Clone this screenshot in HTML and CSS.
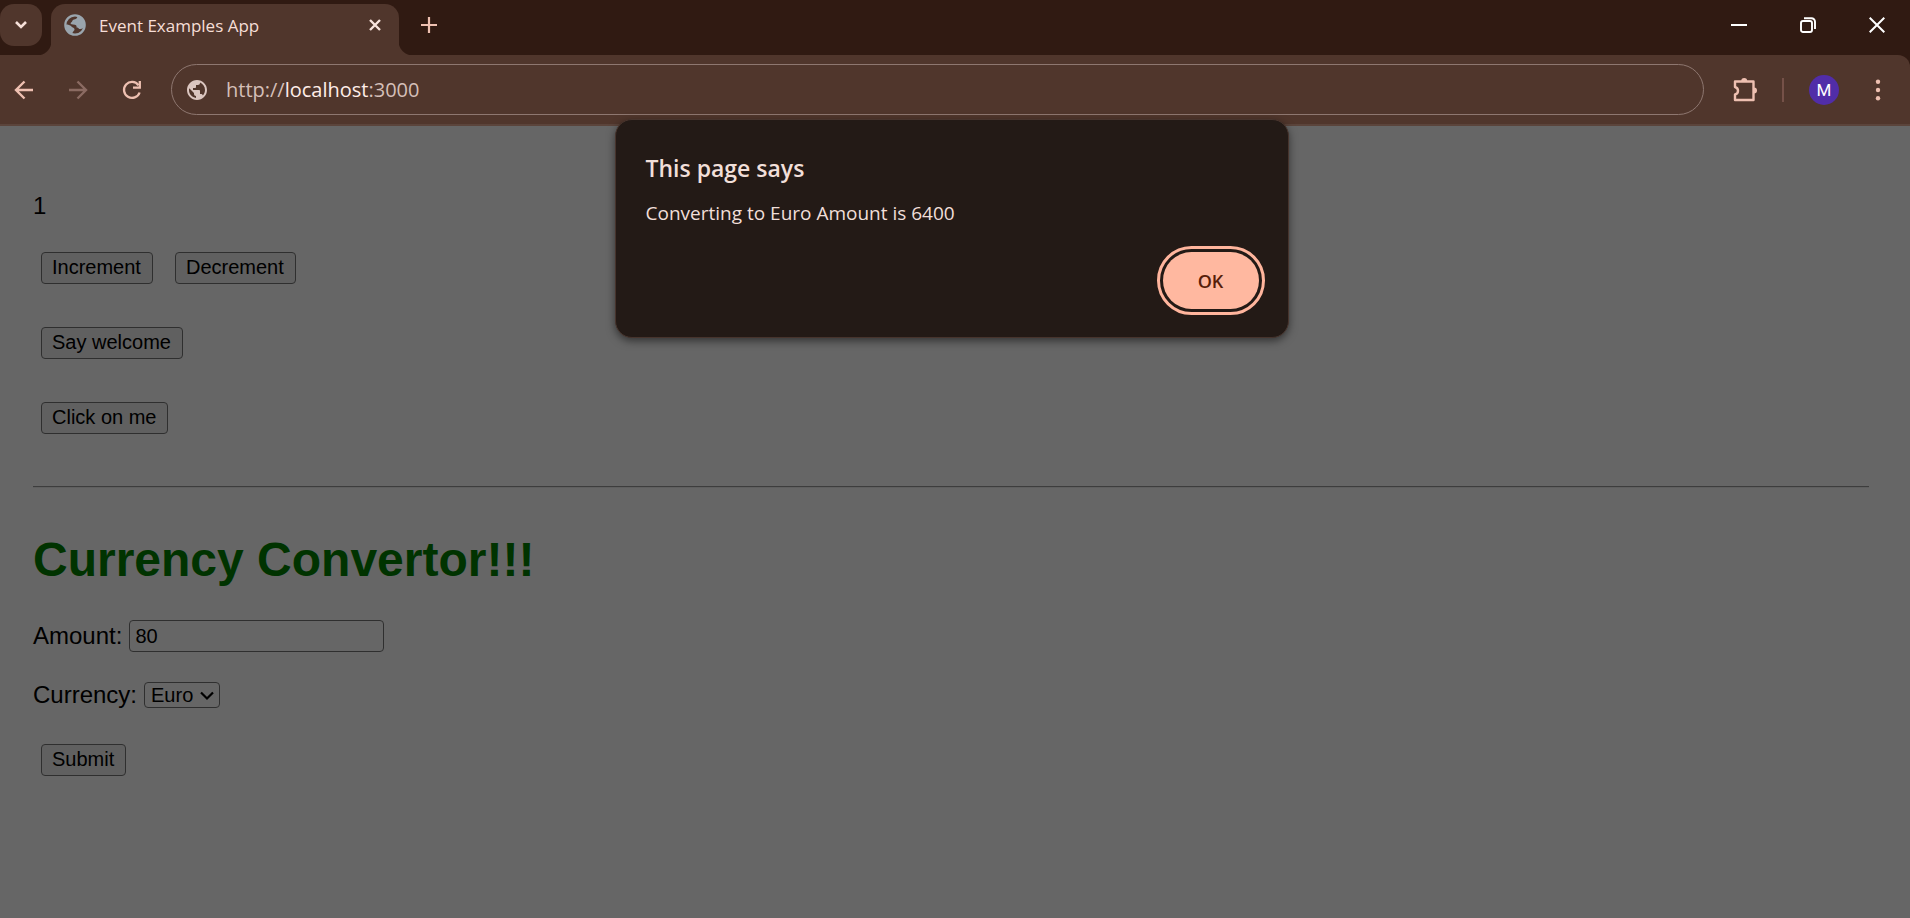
FILE: index.html
```html
<!DOCTYPE html>
<html lang="en">
<head>
<meta charset="utf-8">
<title>Event Examples App</title>
<link rel="stylesheet" href="styles.css">
</head>
<body>
<header class="browser">
  <div class="tabstrip">
    <button class="tab-search" aria-label="Search tabs"><svg width="14" height="10" viewBox="0 0 14 10"><path d="M2 2l5 5 5-5" fill="none" stroke="#f6e0d9" stroke-width="2.6"/></svg></button>
    <div class="tab">
      <svg class="favicon" width="22" height="22" viewBox="0 0 22 22"><circle cx="11" cy="11" r="9.7" fill="none" stroke="#9aa5ad" stroke-width="2.2"/><path d="M13.5 2.5C13 5 11.500 5 10 5.500C8 6 8.500 8 7 8.500C6 9.500 7 10.500 9 10.500C12 10.500 13 11.500 12.500 13.500C14 13.500 14.500 14 15 15C17 15 18.500 15 20.500 13V8C19 4.500 16.500 2.500 13.500 2.500ZM2 10.500C4 10.500 6 11 7.500 12.500C8.500 14 10.500 13.500 10.500 15.500C10.500 17 8.500 17 8.500 20C4.500 18.500 1.500 15 2 10.500Z" fill="#9aa5ad"/></svg>
      <span class="tab-title">Event Examples App</span>
      <button class="icon-button tab-close" aria-label="Close tab"><svg width="14" height="14" viewBox="0 0 14 14"><path d="M2 2l10 10M12 2L2 12" stroke="#f9e4dd" stroke-width="2.4"/></svg></button>
    </div>
    <button class="icon-button new-tab" aria-label="New tab"><svg width="16" height="16" viewBox="0 0 16 16"><path d="M8 0v16M0 8h16" stroke="#eec0b1" stroke-width="2.2"/></svg></button>
    <div class="window-controls">
      <button class="icon-button" aria-label="Minimize"><svg width="16" height="16" viewBox="0 0 16 16"><path d="M0 8h16" stroke="#fff" stroke-width="2"/></svg></button>
      <button class="icon-button" aria-label="Restore"><svg width="16" height="16" viewBox="0 0 16 16" fill="none" stroke="#fff" stroke-width="1.9"><rect x="1" y="4" width="11" height="11" rx="2"/><path d="M4 1.200h7.500a3.500 3.500 0 0 1 3.500 3.500V12"/></svg></button>
      <button class="icon-button" aria-label="Close"><svg width="16" height="16" viewBox="0 0 16 16"><path d="M.7.7l14.600 14.600M15.300.7L.7 15.300" stroke="#fff" stroke-width="2"/></svg></button>
    </div>
  </div>
  <div class="toolbar">
    <nav class="nav-buttons">
      <button class="icon-button" aria-label="Back"><svg width="20" height="20" viewBox="0 0 20 20"><path d="M19 10H2M10.500 1.500L2 10l8.500 8.500" fill="none" stroke="#eec0b1" stroke-width="2.400"/></svg></button>
      <button class="icon-button" aria-label="Forward" disabled><svg width="20" height="20" viewBox="0 0 20 20"><path d="M1 10h17M9.500 1.500L18 10l-8.500 8.500" fill="none" stroke="#8b6b62" stroke-width="2.400"/></svg></button>
      <button class="icon-button" aria-label="Reload"><svg width="20" height="20" viewBox="0 0 20 20"><path d="M17.600 12.500A8 8 0 1 1 16.500 5.200" fill="none" stroke="#eec0b1" stroke-width="2.300"/><path d="M17.800 1v6.600H11" fill="none" stroke="#eec0b1" stroke-width="2.300"/></svg></button>
    </nav>
    <div class="omnibox">
      <svg width="24" height="24" viewBox="0 0 24 24"><path fill="#dbc6c0" d="M12 2C6.480 2 2 6.480 2 12s4.480 10 10 10 10-4.480 10-10S17.520 2 12 2zm-1 17.930c-3.950-.49-7-3.850-7-7.930 0-.62.08-1.210.21-1.790L9 15v1c0 1.100.9 2 2 2v1.930zm6.900-2.540c-.26-.81-1-1.390-1.900-1.390h-1v-3c0-.55-.45-1-1-1H8v-2h2c.55 0 1-.45 1-1V7h2c1.100 0 2-.9 2-2v-.41c2.930 1.190 5 4.060 5 7.410 0 2.080-.8 3.970-2.100 5.390z"/></svg>
      <span class="url">http://<span class="url-host">localhost</span>:3000</span>
    </div>
    <button class="icon-button extensions" aria-label="Extensions"><svg width="26" height="26" viewBox="0 0 26 26"><path d="M3 4.500h18.500v18.500H3v-5.500c4-1 4-6.500 0-7.500z" fill="none" stroke="#eec0b1" stroke-width="2.400" stroke-linejoin="round"/><path d="M9.200 4a3 3 0 0 1 6 0zM22 10.500a3 3 0 0 1 0 6z" fill="#eec0b1"/></svg></button>
    <span class="divider"></span>
    <button class="avatar" aria-label="Profile">M</button>
    <button class="icon-button menu" aria-label="Menu"><svg width="6" height="22" viewBox="0 0 6 22" fill="#eec0b1"><circle cx="3" cy="2.700" r="2.200"/><circle cx="3" cy="11" r="2.200"/><circle cx="3" cy="19.300" r="2.200"/></svg></button>
  </div>
</header>
<div class="viewport">
  <main class="page">
    <p class="count">1</p>
    <div class="row"><button class="action">Increment</button> <button class="action">Decrement</button></div>
    <div class="row"><button class="action">Say welcome</button></div>
    <div class="row"><button class="action">Click on me</button></div>
    <hr class="rule">
    <h1 class="heading">Currency Convertor!!!</h1>
    <form class="form">
      <div class="field"><label for="amount">Amount:</label> <input class="amount" id="amount" type="text" value="80"></div>
      <div class="field">
        <label for="currency">Currency:</label>
        <span class="select-wrap">
          <select class="currency" id="currency"><option>Euro</option></select>
          <svg class="select-arrow" width="14" height="10" viewBox="0 0 14 10"><path d="M1 1.500l6 6 6-6" fill="none" stroke="#000" stroke-width="2.2"/></svg>
        </span>
      </div>
      <button class="action" type="button">Submit</button>
    </form>
  </main>
  <div class="scrim">
    <section class="alert" role="alertdialog" aria-labelledby="alert-title" aria-describedby="alert-text">
      <h2 class="alert-title" id="alert-title">This page says</h2>
      <p class="alert-text" id="alert-text">Converting to Euro Amount is 6400</p>
      <button class="alert-ok">OK</button>
    </section>
  </div>
</div>
</body>
</html>
```
FILE: styles.css
```css
* { box-sizing: border-box; }

body {
  margin: 0;
  min-height: 100vh;
  display: flex;
  flex-direction: column;
  font-family: "Open Sans", "Noto Sans", sans-serif;
}

svg { display: block; flex: none; }

/* Browser frame */
.browser { background: #301a12; color: #f6ded7; }

.tabstrip { display: flex; height: 55px; }

.icon-button {
  display: flex;
  align-items: center;
  justify-content: center;
  padding: 0;
  border: 0;
  background: none;
}

.tab-search {
  display: flex;
  align-items: center;
  justify-content: center;
  width: 42px;
  height: 42px;
  margin: 4px 9px 0 0;
  padding: 0;
  border: 0;
  border-radius: 14px;
  background: #50362c;
}

.tab {
  position: relative;
  display: flex;
  align-items: center;
  width: 348px;
  margin-top: 4px;
  padding: 0 17px 9px 13px;
  border-radius: 14px 14px 0 0;
  background: #50362c;
}

.tab::before,
.tab::after {
  content: "";
  position: absolute;
  bottom: 0;
  width: 14px;
  height: 14px;
}

.tab::before { right: 100%; background: radial-gradient(circle at 0 0, transparent 14px, #50362c 15px); }
.tab::after { left: 100%; background: radial-gradient(circle at 100% 0, transparent 14px, #50362c 15px); }

.tab-title { flex: 1; margin-left: 13px; padding-top: 2px; font-size: 17px; line-height: 24px; }

.new-tab { width: 32px; height: 32px; margin: 9px 0 0 14px; }

.window-controls { display: flex; gap: 37px; height: 49px; margin-left: auto; padding-right: 17px; }
.window-controls .icon-button { width: 32px; }

.toolbar {
  display: flex;
  align-items: center;
  height: 71px;
  border-bottom: 2px solid #5b443b;
  border-radius: 0 12px 0 0;
  background: #50362c;
}

.nav-buttons { display: flex; gap: 34px; margin: 0 29px 0 14px; }

.omnibox {
  display: flex;
  align-items: center;
  flex: 1;
  gap: 17px;
  height: 51px;
  padding: 0 13px;
  border: 1px solid #8e7770;
  border-radius: 26px;
}

.url { font-size: 20px; line-height: 28px; color: #d5bfb8; }
.url-host { color: #ffede8; }

.extensions { margin-left: 28px; }
.divider { width: 2px; height: 24px; margin: 0 25px 0 24px; background: #755148; }

.avatar {
  width: 30px;
  height: 30px;
  padding: 0;
  border: 0;
  border-radius: 50%;
  background: #512da8;
  color: #fff;
  font: 17px/30px Roboto, sans-serif;
}

.menu { margin: 0 29px 0 36px; }

/* Web page */
.viewport { position: relative; flex: 1; background: #fff; }

.page {
  padding: 66px 41px 0 33px;
  font: 24px/27px "Liberation Sans", Arial, sans-serif;
  color: #000;
}

.count { margin: 0 0 33px; }
.row { height: 32px; margin-bottom: 43px; display: flex; gap: 22px; padding-left: 8px; }

.action {
  height: 32px;
  padding: 0 11px 2px 10px;
  border: 1px solid #767676;
  border-radius: 4px;
  background: #efefef;
  color: #000;
  font: 20px/23px "Liberation Sans", Arial, sans-serif;
}

.rule { margin: 52px 0 0; border: 0; border-top: 1px solid #9a9a9a; border-bottom: 1px solid #eee; }

.heading { margin: 44px 0 33px; font-size: 48px; line-height: 55px; color: #008000; }

.field { display: flex; align-items: center; gap: 7px; height: 32px; margin-bottom: 27px; }
.field label { padding-bottom: 2px; }

.amount,
.currency {
  border: 1px solid #767676;
  border-radius: 4px;
  background: #fff;
  color: #000;
  font: 20px/23px "Liberation Sans", Arial, sans-serif;
}

.amount { width: 255px; height: 32px; padding: 0 5px; }

.select-wrap { position: relative; display: flex; }
.currency { height: 26px; padding: 0 25px 0 6px; appearance: none; }
.select-arrow { position: absolute; right: 6px; top: 9px; pointer-events: none; }

.form .action { margin: 6px 8px; }

/* Modal alert */
.scrim {
  position: absolute;
  inset: 0;
  display: flex;
  justify-content: center;
  align-items: flex-start;
  padding-right: 7px;
  background: rgba(0, 0, 0, 0.6);
}

.alert {
  display: flex;
  flex-direction: column;
  width: 674px;
  margin-top: -7px;
  padding: 32px 29px 28px 30px;
  border: 1px solid #47342d;
  border-radius: 17px;
  background: #231a16;
  color: #f1dfd9;
  box-shadow: 0 3px 8px rgba(0, 0, 0, 0.5);
}

.alert-title { margin: 0; font-size: 23px; font-weight: 600; line-height: 32px; }
.alert-text { margin: 16px 0 26px; font-size: 19px; line-height: 26px; }

.alert-ok {
  align-self: flex-end;
  width: 96px;
  height: 57px;
  border: 0;
  border-radius: 29px;
  outline: 3px solid #ffb59d;
  outline-offset: 3px;
  background: #ffb8a0;
  color: #571e0a;
  font: 600 18px/24px "Open Sans", "Noto Sans", sans-serif;
}
```
